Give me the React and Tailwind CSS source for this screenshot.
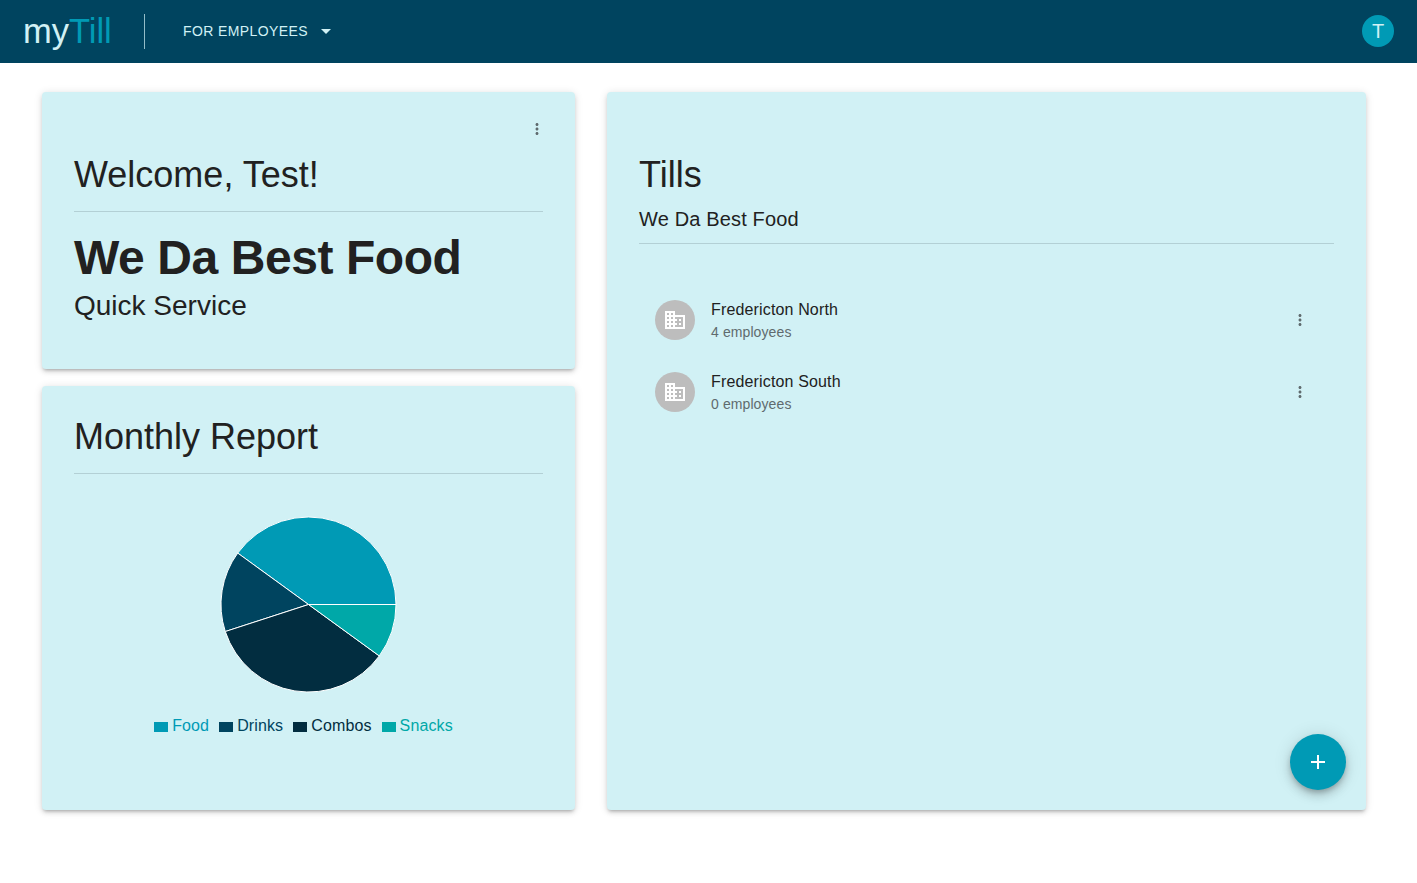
import React from "react";

const FONT = "font-['Liberation_Sans',Arial,sans-serif]";
const R = 87.5;
const pt = (deg) => {
  const a = (deg * Math.PI) / 180;
  return [R + 1 + R * Math.cos(a), R + 1 - R * Math.sin(a)];
};
const slices = [
  { name: "Food", from: 0, to: 144, color: "#009ab5", text: "text-[#009ab5]", box: "bg-[#009ab5]" },
  { name: "Drinks", from: 144, to: 198, color: "#00445f", text: "text-[#00445f]", box: "bg-[#00445f]" },
  { name: "Combos", from: 198, to: 324, color: "#022d40", text: "text-[#022d40]", box: "bg-[#022d40]" },
  { name: "Snacks", from: 324, to: 360, color: "#00a8a8", text: "text-[#00a8a8]", box: "bg-[#00a8a8]" },
];

function Dots({ className = "" }) {
  return (
    <svg width="18" height="18" viewBox="0 0 24 24" className={className} fill="#5f6b6e">
      <path d="M12 8c1.1 0 2-.9 2-2s-.9-2-2-2-2 .9-2 2 .9 2 2 2zm0 2c-1.1 0-2 .9-2 2s.9 2 2 2 2-.9 2-2-.9-2-2-2zm0 6c-1.1 0-2 .9-2 2s.9 2 2 2 2-.9 2-2-.9-2-2-2z" />
    </svg>
  );
}

function Till({ name, count }) {
  return (
    <div className="flex items-center h-[72px] px-4">
      <div className="w-10 h-10 rounded-full bg-[#bdbdbd] flex items-center justify-center shrink-0">
        <svg width="24" height="24" viewBox="0 0 24 24" fill="#fff">
          <path d="M12 7V3H2v18h20V7H12zM6 19H4v-2h2v2zm0-4H4v-2h2v2zm0-4H4V9h2v2zm0-4H4V5h2v2zm4 12H8v-2h2v2zm0-4H8v-2h2v2zm0-4H8V9h2v2zm0-4H8V5h2v2zm10 12h-8v-2h2v-2h-2v-2h2v-2h-2V9h8v10zm-2-8h-2v2h2v-2zm0 4h-2v2h2v-2z" />
        </svg>
      </div>
      <div className="ml-4 flex-1">
        <div className="text-base leading-[24px] tracking-[0.15px] text-[#212121]">{name}</div>
        <div className="text-sm leading-[20px] tracking-[0.1px] text-[#5f6b6e]">{count}</div>
      </div>
      <Dots className="mr-[9px]" />
    </div>
  );
}

const card = "bg-[#d1f1f5] rounded-[4px] shadow-[0_1px_8px_0_rgba(0,0,0,0.12),0_3px_4px_0_rgba(0,0,0,0.1),0_3px_3px_-2px_rgba(0,0,0,0.2)]";

export default function App() {
  return (
    <div className={`${FONT} min-h-[883px] bg-white`}>
      <header className="h-[63px] bg-[#00445f] flex items-center pl-[23px] pr-[23px]">
        <div className="w-[91px] text-[34.5px] font-normal leading-none whitespace-nowrap">
          <span className="text-[#d1f1f5]">my</span>
          <span className="text-[#009ab5]">Till</span>
        </div>
        <div className="w-px h-[35px] bg-[#d1f1f5]/70 ml-[30px]" />
        <div className="ml-[38px] -mt-[1px] text-sm tracking-[0.4px] text-[#d1f1f5]">FOR EMPLOYEES</div>
        <svg width="10" height="5" viewBox="0 0 10 5" className="ml-[13px]" fill="#d1f1f5">
          <path d="M0 0l5 5 5-5z" />
        </svg>
        <div className="ml-auto -mt-[1px] w-8 h-8 rounded-full bg-[#009ab5] flex items-center justify-center text-[20px] text-[#d1f1f5]">T</div>
      </header>

      <main className="flex gap-8 pl-[42px] pt-[29px]">
        <div className="w-[533px] flex flex-col gap-[17px]">
          <section className={`${card} h-[277px] px-8 pt-[21px]`}>
            <div className="flex justify-end h-[32px] items-center -mr-[3px]">
              <Dots />
            </div>
            <h1 className="mt-[9px] text-[36px] leading-[42px] text-[#212121] pb-[15px] border-b border-[#b3d0d5]">Welcome, Test!</h1>
            <div className="mt-[18px] text-[48px] leading-[56px] font-bold tracking-[-0.42px] text-[#212121]">We Da Best Food</div>
            <div className="text-[28px] leading-[40px] text-[#212121]">Quick Service</div>
          </section>

          <section className={`${card} h-[424px] px-8 pt-[30px]`}>
            <h2 className="text-[36px] leading-[42px] text-[#212121] pb-[15px] border-b border-[#b3d0d5]">Monthly Report</h2>
            <div className="flex justify-center mt-[42px]">
              <svg width="177" height="177" viewBox="0 0 177 177">
                {slices.map((s) => {
                  const [x1, y1] = pt(s.from);
                  const [x2, y2] = pt(s.to);
                  return (
                    <path
                      key={s.name}
                      d={`M${R + 1} ${R + 1}L${x1} ${y1}A${R} ${R} 0 0 0 ${x2} ${y2}Z`}
                      fill={s.color}
                      stroke="#fff"
                      strokeWidth="1"
                    />
                  );
                })}
              </svg>
            </div>
            <div className="flex justify-center gap-[10px] mt-[21px] -ml-[10px] text-base leading-[24px] tracking-[0.13px]">
              {slices.map((s) => (
                <div key={s.name} className={`flex items-center gap-[4px] ${s.text}`}>
                  <span className={`w-[14px] h-[10px] mt-[2px] ${s.box}`} />
                  {s.name}
                </div>
              ))}
            </div>
          </section>
        </div>

        <section className={`${card} w-[759px] h-[718px] px-8 pt-[62px] relative`}>
          <h2 className="text-[36px] leading-[42px] text-[#212121]">Tills</h2>
          <div className="mt-[9px] text-[20px] leading-[28px] tracking-[0.15px] text-[#212121] pb-[10px] border-b border-[#b3d0d5]">We Da Best Food</div>
          <div className="mt-10">
            <Till name="Fredericton North" count="4 employees" />
            <Till name="Fredericton South" count="0 employees" />
          </div>
          <button className="absolute right-5 bottom-5 w-14 h-14 rounded-full bg-[#009ab5] flex items-center justify-center shadow-[0_3px_5px_-1px_rgba(0,0,0,0.2),0_6px_10px_0_rgba(0,0,0,0.14),0_1px_18px_0_rgba(0,0,0,0.12)]">
            <svg width="24" height="24" viewBox="0 0 24 24" fill="#fff">
              <path d="M19 13h-6v6h-2v-6H5v-2h6V5h2v6h6v2z" />
            </svg>
          </button>
        </section>
      </main>
    </div>
  );
}
